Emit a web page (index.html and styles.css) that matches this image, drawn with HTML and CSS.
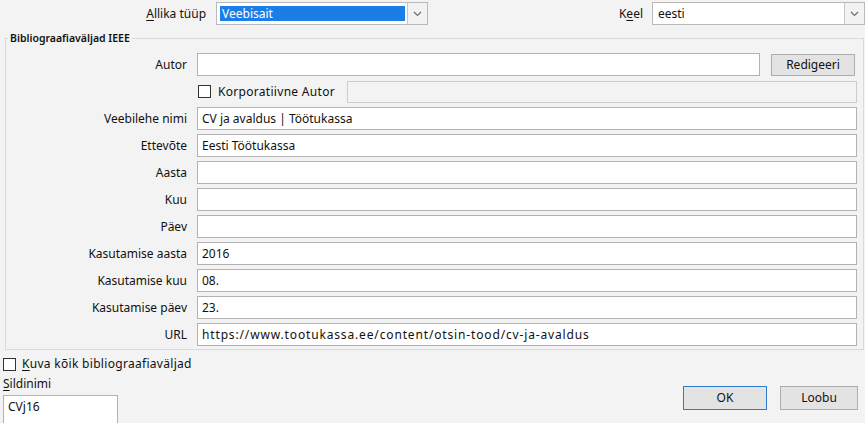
FILE: index.html
```html
<!DOCTYPE html>
<html lang="et">
<head>
<meta charset="utf-8">
<title>Loo allikas</title>
<link rel="stylesheet" href="styles.css">
</head>
<body>
<div class="dialog">
  <div class="top">
    <span class="toplabel src-label"><u>A</u>llika tüüp</span>
    <div class="combo src-combo">
      <div class="combo-text"><span class="sel">Veebisait</span></div>
      <div class="combo-btn"><svg width="9" height="6" viewBox="0 0 9 6"><path d="M1 1 L4.5 4.5 L8 1" fill="none" stroke="#6d6d6d" stroke-width="1.2"/></svg></div>
    </div>
    <span class="toplabel lang-label">K<u>e</u>el</span>
    <div class="combo lang-combo">
      <div class="combo-text plain">eesti</div>
      <div class="combo-btn"><svg width="9" height="6" viewBox="0 0 9 6"><path d="M1 1 L4.5 4.5 L8 1" fill="none" stroke="#6d6d6d" stroke-width="1.2"/></svg></div>
    </div>
  </div>

  <fieldset class="group">
    <legend>Bibliograafiaväljad IEEE</legend>
    <div class="row">
      <span class="lbl">Autor</span>
      <div class="field"></div>
      <div class="btn edit-btn">Redigeeri</div>
    </div>
    <div class="row corp-row">
      <span class="lbl"></span>
      <span class="check"><span class="box"></span>Korporatiivne Autor</span>
      <div class="field disabled"></div>
    </div>
    <div class="row"><span class="lbl">Veebilehe nimi</span><div class="field">CV ja avaldus | Töötukassa</div></div>
    <div class="row"><span class="lbl">Ettevõte</span><div class="field">Eesti Töötukassa</div></div>
    <div class="row"><span class="lbl">Aasta</span><div class="field"></div></div>
    <div class="row"><span class="lbl">Kuu</span><div class="field"></div></div>
    <div class="row"><span class="lbl">Päev</span><div class="field"></div></div>
    <div class="row"><span class="lbl">Kasutamise aasta</span><div class="field">2016</div></div>
    <div class="row"><span class="lbl">Kasutamise kuu</span><div class="field">08.</div></div>
    <div class="row"><span class="lbl">Kasutamise päev</span><div class="field">23.</div></div>
    <div class="row"><span class="lbl">URL</span><div class="field url-field">https://www.tootukassa.ee/content/otsin-tood/cv-ja-avaldus</div></div>
  </fieldset>

  <div class="bottom">
    <div class="bottom-left">
      <span class="check show-all"><span class="box"></span><span><u>K</u>uva kõik bibliograafiaväljad</span></span>
      <span class="tag-label"><u>S</u>ildinimi</span>
      <div class="field tag-field">CVj16</div>
    </div>
    <div class="buttons">
      <div class="btn ok-btn">OK</div>
      <div class="btn cancel-btn">Loobu</div>
    </div>
  </div>
</div>
</body>
</html>
```

FILE: styles.css
```css
html, body {
  margin: 0;
  padding: 0;
  background: #f3f3f3;
  overflow: hidden;
}
body {
  width: 865px;
  height: 423px;
  font-family: "Noto Sans", "Open Sans", sans-serif;
  font-size: 12px;
  line-height: 16px;
  color: #111;
}
.dialog {
  display: flex;
  flex-direction: column;
}
u { text-decoration-thickness: 1px; text-underline-offset: 2px; }

/* top row */
.top {
  display: flex;
  align-items: center;
  padding-top: 2px;
  height: 23px;
}
.toplabel {
  text-align: right;
  box-sizing: border-box;
}
.src-label { width: 217px; padding-right: 10px; }
.lang-label { width: 225px; padding-right: 9px; }
.combo {
  display: flex;
  height: 23px;
  box-sizing: border-box;
  border: 1px solid #b9b9b9;
  background: #fff;
}
.src-combo { width: 213px; }
.lang-combo { width: 214px; }
.combo-text {
  flex: 1;
  display: flex;
  align-items: center;
  padding: 0 2px 0 3px;
}
.combo-text.plain { padding-left: 5px; }
.sel {
  flex: 1;
  background: #1a7ee6;
  color: #fff;
  height: 15px;
  line-height: 15px;
  padding-left: 2px;
}
.combo-btn {
  width: 19px;
  border-left: 1px solid #c8c8c8;
  background: #f2f2f2;
  display: flex;
  align-items: center;
  justify-content: center;
}

/* group */
.group {
  margin: 5px 1px 0 5px;
  padding: 7px 6px 3px 0;
  border: 1px solid #dadada;
  display: flex;
  flex-direction: column;
  gap: 4px;
  min-width: 0;
}
.group legend {
  margin-left: 2px;
  padding: 0 2px;
  line-height: 16px;
  font-size: 10.5px;
  font-weight: 600;
}
.row {
  display: flex;
  align-items: center;
  height: 23px;
}
.lbl {
  width: 181px;
  margin-right: 10px;
  text-align: right;
  flex: none;
}
.field {
  flex: 1;
  height: 23px;
  box-sizing: border-box;
  border: 1px solid #b2b2b2;
  background: #fff;
  padding-left: 4px;
  line-height: 21px;
  white-space: nowrap;
  overflow: hidden;
}
.url-field { letter-spacing: 0.85px; }
.field.disabled {
  background: #f3f3f3;
  border-color: #cdcdcd;
  height: 22px;
}
.btn {
  box-sizing: border-box;
  height: 22px;
  border: 1px solid #adadad;
  background: #e3e3e3;
  text-align: center;
  line-height: 20px;
}
.edit-btn {
  width: 84px;
  margin: 0 2px 0 11px;
}
.check {
  display: flex;
  align-items: center;
}
.box {
  width: 13px;
  height: 13px;
  box-sizing: border-box;
  border: 1px solid #333;
  background: #fff;
  margin-right: 7px;
}
.corp-row .check {
  margin-left: 1px;
  width: 149px;
  letter-spacing: 0.3px;
}

/* bottom */
.bottom {
  display: flex;
  justify-content: space-between;
  padding-top: 6px;
}
.bottom-left {
  display: flex;
  flex-direction: column;
  align-items: flex-start;
  padding-left: 3px;
}
.show-all { letter-spacing: 0.3px; }
.show-all .box { margin-right: 6px; }
.tag-label { margin-top: 4px; }
.tag-field {
  flex: none;
  width: 115px;
  height: 30px;
  margin-top: 3px;
  padding-top: 0;
}
.buttons {
  display: flex;
  gap: 13px;
  margin-top: 30px;
  margin-right: 7px;
  align-self: flex-start;
}
.ok-btn {
  width: 84px;
  height: 24px;
  line-height: 22px;
  border-color: #2f7bcc;
}
.cancel-btn {
  width: 78px;
  height: 24px;
  line-height: 22px;
}
```
